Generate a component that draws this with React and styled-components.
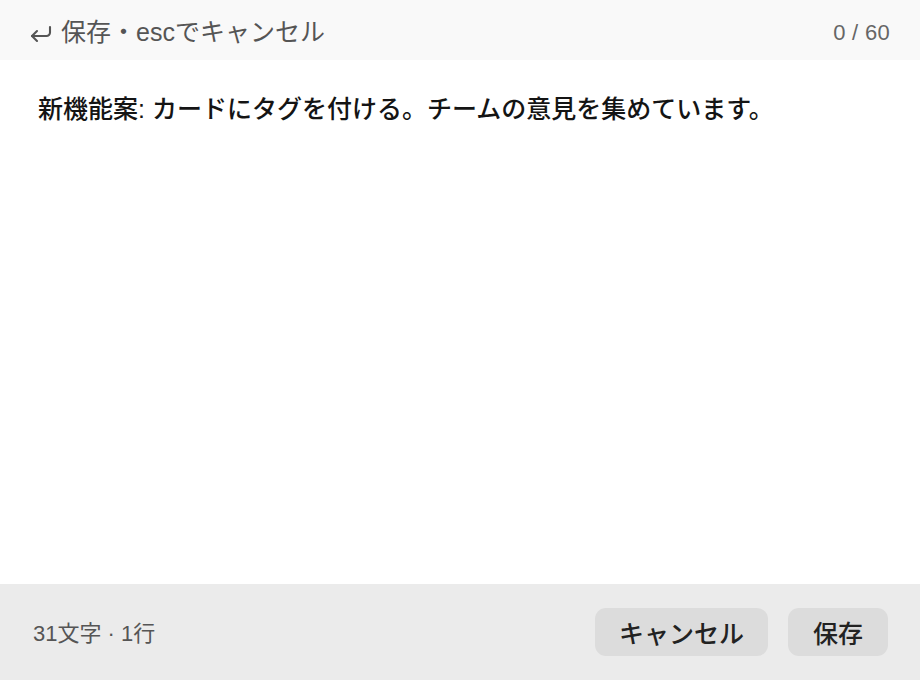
import React from "react";
import styled, { createGlobalStyle } from "styled-components";

const Global = createGlobalStyle`
  html, body { margin: 0; padding: 0; background: #ffffff; }
  body { font-family: "Liberation Sans", "Noto Sans CJK JP", sans-serif; }
  * { box-sizing: border-box; }
`;

const Page = styled.div`
  width: 920px;
  height: 680px;
  display: flex;
  flex-direction: column;
  background: #ffffff;
`;

const Header = styled.div`
  height: 60px;
  flex: none;
  display: flex;
  align-items: center;
  justify-content: space-between;
  padding: 5px 30px 0 28px;
  background: #f9f9f9;
  color: #555555;
`;

const Hint = styled.div`
  display: flex;
  align-items: center;
  gap: 7px;
  font-size: 25px;
  line-height: 1;
  font-weight: 400;
`;

const Counter = styled.div`
  font-size: 22px;
  color: #666666;
  letter-spacing: 0.3px;
`;

const Body = styled.div`
  flex: 1;
  padding: 30px 38px;
`;

const Text = styled.p`
  margin: 0;
  font-size: 25px;
  line-height: 38px;
  font-weight: 500;
  color: #141414;
  font-family: "Liberation Sans", "Noto Sans CJK JP", sans-serif;
`;

const Footer = styled.div`
  height: 96px;
  flex: none;
  display: flex;
  align-items: center;
  justify-content: space-between;
  padding: 0 32px 0 33px;
  background: #ebebeb;
`;

const Stats = styled.div`
  font-size: 22px;
  color: #555555;
  padding-bottom: 2px;
`;

const Actions = styled.div`
  display: flex;
  gap: 20px;
`;

const Button = styled.button`
  height: 48px;
  min-width: ${(p) => p.$w}px;
  padding: 0 24px;
  border: none;
  border-radius: 11px;
  background: #dcdcdc;
  color: #222222;
  font-family: "Liberation Sans", "Noto Sans CJK JP", sans-serif;
  font-size: 25px;
  font-weight: 500;
  cursor: pointer;
`;

const ReturnIcon = () => (
  <svg width="26" height="24" viewBox="0 0 26 24" fill="none" stroke="#555555" strokeWidth="2.1" strokeLinecap="round" strokeLinejoin="round">
    <path d="M22 6v5.5a3.5 3.5 0 0 1-3.5 3.5H4" />
    <polyline points="9,10 4,15 9,20" />
  </svg>
);

export default function App() {
  return (
    <Page>
      <Global />
      <Header>
        <Hint>
          <ReturnIcon />
          <span>保存・escでキャンセル</span>
        </Hint>
        <Counter>0 / 60</Counter>
      </Header>
      <Body>
        <Text>新機能案: カードにタグを付ける。チームの意見を集めています。</Text>
      </Body>
      <Footer>
        <Stats>31文字 · 1行</Stats>
        <Actions>
          <Button $w={172}>キャンセル</Button>
          <Button $w={100}>保存</Button>
        </Actions>
      </Footer>
    </Page>
  );
}
